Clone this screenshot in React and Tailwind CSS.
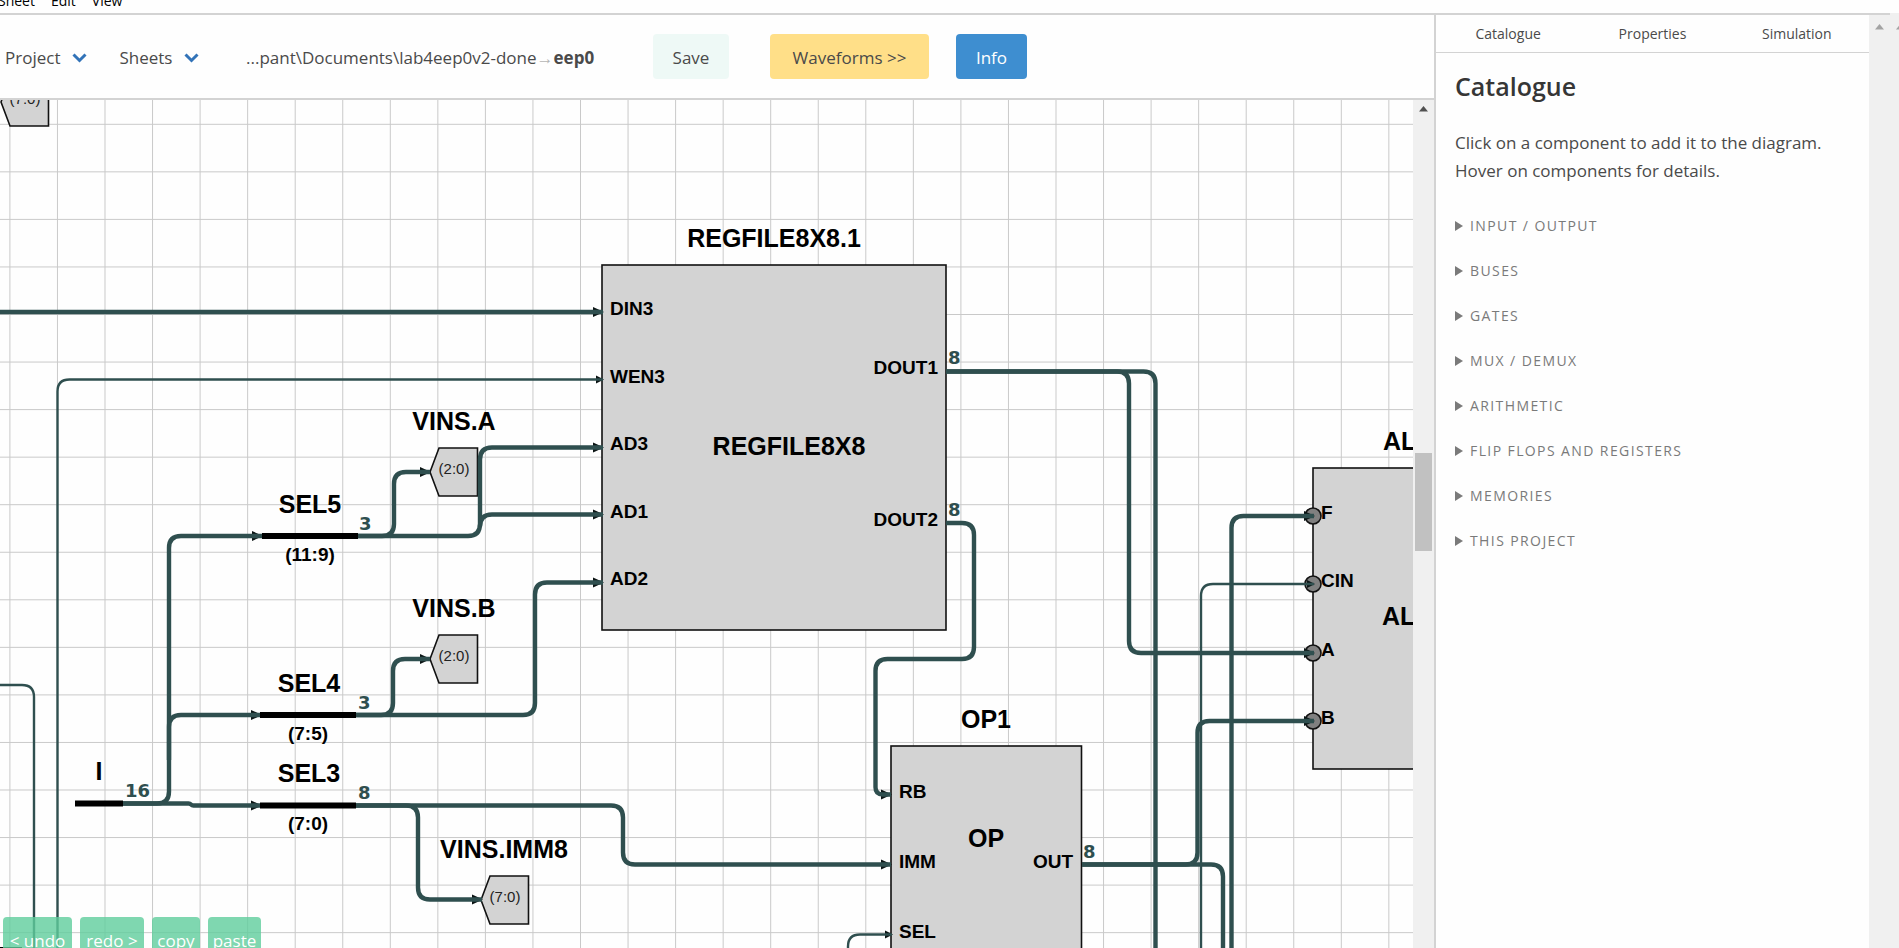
import React from "react";

const WIRE = "#2f4f4f";

// Turns a list of orthogonal points into a path with rounded corners.
function roundedPath(points, radius = 12) {
  let d = `M${points[0][0]} ${points[0][1]}`;
  for (let i = 1; i < points.length; i++) {
    const [x, y] = points[i];
    if (i === points.length - 1) {
      d += `L${x} ${y}`;
      break;
    }
    const [px, py] = points[i - 1];
    const [nx, ny] = points[i + 1];
    const before = Math.hypot(x - px, y - py);
    const after = Math.hypot(nx - x, ny - y);
    const r = Math.min(radius, i === 1 ? before : before / 2, after / 2);
    const ax = x + ((px - x) / before) * r;
    const ay = y + ((py - y) / before) * r;
    const bx = x + ((nx - x) / after) * r;
    const by = y + ((ny - y) / after) * r;
    d += `L${ax} ${ay}Q${x} ${y} ${bx} ${by}`;
  }
  return d;
}

const wires = [
  { p: [[0, 312], [603, 312]], arrow: true },
  { p: [[57.5, 960], [57.5, 379.5], [603, 379.5]], thin: true, arrow: true },
  { p: [[0, 685], [34, 685], [34, 960]], thin: true },
  { p: [[357, 536], [480, 536], [480, 447.5], [603, 447.5]], arrow: true },
  { p: [[480, 526.5], [480, 514.5], [603, 514.5]], arrow: true },
  { p: [[357, 536], [394, 536], [394, 472], [430, 472]], arrow: true },
  { p: [[356, 715], [535, 715], [535, 582.5], [603, 582.5]], arrow: true },
  { p: [[356, 715], [393, 715], [393, 659], [430, 659]], arrow: true },
  { p: [[123, 803.5], [169, 803.5], [169, 536], [262, 536]], arrow: true },
  { p: [[169, 760], [169, 715], [261, 715]], arrow: true },
  { p: [[123, 803.5], [190, 803.5], [192, 805.5], [261, 805.5]], arrow: true },
  { p: [[356, 805.5], [623, 805.5], [623, 864.5], [891, 864.5]], arrow: true },
  { p: [[356, 805.5], [418, 805.5], [418, 899.5], [482, 899.5]], arrow: true },
  { p: [[946, 371.5], [1155.5, 371.5], [1155.5, 960]] },
  { p: [[946, 371.5], [1129, 371.5], [1129, 653], [1314, 653]], arrow: true },
  { p: [[946, 523], [974, 523], [974, 659], [875.5, 659], [875.5, 780], [875.5, 794.5], [891, 794.5]], arrow: true },
  { p: [[848, 960], [848, 934.5], [892, 934.5]], thin: true, arrow: true },
  { p: [[1082, 864.5], [1223, 864.5], [1223, 960]] },
  { p: [[1082, 864.5], [1197.5, 864.5], [1197.5, 721], [1314, 721]], arrow: true },
  { p: [[1201, 960], [1201, 584], [1314, 584]], thin: true, arrow: true },
  { p: [[1231.5, 960], [1231.5, 516], [1314, 516]], arrow: true },
];

const titles = [
  [774, 247, "REGFILE8X8.1"],
  [789, 455, "REGFILE8X8"],
  [454, 430, "VINS.A"],
  [454, 617, "VINS.B"],
  [504, 858, "VINS.IMM8"],
  [310, 513, "SEL5"],
  [309, 692, "SEL4"],
  [309, 782, "SEL3"],
  [99, 780, "I"],
  [986, 728, "OP1"],
  [986, 847, "OP"],
];

const ranges = [
  [310, 561, "(11:9)"],
  [308, 740, "(7:5)"],
  [308, 830, "(7:0)"],
];

const inPorts = [
  [610, 315, "DIN3"],
  [610, 383, "WEN3"],
  [610, 450, "AD3"],
  [610, 518, "AD1"],
  [610, 585, "AD2"],
  [899, 798, "RB"],
  [899, 868, "IMM"],
  [899, 938, "SEL"],
  [1321, 519, "F"],
  [1321, 587, "CIN"],
  [1321, 656, "A"],
  [1321, 724, "B"],
];

const outPorts = [
  [938, 374, "DOUT1"],
  [938, 526, "DOUT2"],
  [1073, 868, "OUT"],
];

const widths = [
  [359, 530, "3"],
  [358, 709, "3"],
  [358, 799, "8"],
  [125, 797, "16"],
  [948, 364, "8"],
  [948, 516, "8"],
  [1083, 858, "8"],
];

const tags = [
  [430, 472, "(2:0)"],
  [430, 659, "(2:0)"],
  [481, 900, "(7:0)"],
  [1, 102, "(7:0)"],
];

const bars = [
  [262, 536, 96],
  [260, 715, 96],
  [260, 805.5, 96],
  [75, 803.5, 48],
  [-26, 950, 48],
];

function Wire({ p, thin, arrow }) {
  const [x, y] = p[p.length - 1];
  const back = thin ? 7 : 10;
  const half = thin ? 4 : 5;
  return (
    <g>
      {arrow && <polygon points={`${x - back},${y - half} ${x + 1},${y} ${x - back},${y + half}`} fill="#0b1414" />}
      <path d={roundedPath(p)} fill="none" stroke={WIRE} strokeWidth={thin ? 2.4 : 4.4} />
    </g>
  );
}

function Schematic() {
  return (
    <svg className="block h-full w-full" role="img" aria-label="Schematic">
      <defs>
        <pattern id="grid" x="9.4" y="123.8" width="47.55" height="47.55" patternUnits="userSpaceOnUse">
          <path d="M0 .5H47.55M.5 0V47.55" stroke="#c9c9c9" strokeWidth="1" />
        </pattern>
      </defs>
      <g transform="translate(0 -100)">
        <rect x="0" y="100" width="100%" height="100%" fill="url(#grid)" />
        <g fill="#d3d3d3" stroke="#111" strokeWidth="1.6">
          <rect x="602" y="265" width="344" height="365" />
          <rect x="891" y="746" width="190.5" height="240" />
          <rect x="1313" y="468" width="190" height="301" />
          {tags.map(([x, y]) => (
            <polygon key={`${x}-${y}`} points={`${x},${y} ${x + 9},${y - 24} ${x + 47.5},${y - 24} ${x + 47.5},${y + 24} ${x + 9},${y + 24}`} />
          ))}
        </g>
        <g fill="#808080" stroke="#111" strokeWidth="1.6">
          {[516, 584, 653, 721].map((y) => (
            <circle key={y} cx="1313" cy={y} r="8" />
          ))}
        </g>
        {wires.map((w, i) => (
          <Wire key={i} {...w} />
        ))}
        {bars.map(([x, y, w]) => (
          <rect key={`${x}-${y}`} x={x} y={y - 3} width={w} height="6" fill="#000" />
        ))}
        <g className="font-['Liberation_Sans',Arial,sans-serif] text-[25px] font-bold">
          {titles.map(([x, y, t]) => (
            <text key={t} x={x} y={y} textAnchor="middle">{t}</text>
          ))}
          <text x="1383" y="450">ALU</text>
          <text x="1382" y="625">ALU</text>
        </g>
        <g className="font-['Liberation_Sans',Arial,sans-serif] text-[19px] font-bold">
          {ranges.map(([x, y, t]) => (
            <text key={t} x={x} y={y} textAnchor="middle">{t}</text>
          ))}
          {inPorts.map(([x, y, t]) => (
            <text key={t} x={x} y={y}>{t}</text>
          ))}
          {outPorts.map(([x, y, t]) => (
            <text key={t} x={x} y={y} textAnchor="end">{t}</text>
          ))}
        </g>
        <g className="font-['Liberation_Sans',Arial,sans-serif] text-[15px]" fill="#222">
          {tags.map(([x, y, t]) => (
            <text key={`${x}-${y}`} x={x + 24} y={y + 2} textAnchor="middle">{t}</text>
          ))}
        </g>
        <g className="font-['DejaVu_Sans',Verdana,sans-serif] text-[18px] font-bold" fill={WIRE}>
          {widths.map(([x, y, t]) => (
            <text key={`${x}-${y}`} x={x} y={y}>{t}</text>
          ))}
        </g>
      </g>
    </svg>
  );
}

function Dropdown({ label }) {
  return (
    <button type="button" className="flex items-center gap-3">
      {label}
      <svg width="15" height="10" viewBox="0 0 15 10" aria-hidden="true">
        <path d="M1.5 1.5L7.5 7.5L13.5 1.5" fill="none" stroke="#3273b8" strokeWidth="3" />
      </svg>
    </button>
  );
}

function ScrollArrow({ className }) {
  return (
    <svg width="9" height="6" viewBox="0 0 9 6" className={className} aria-hidden="true">
      <path d="M0 5.5L4.5 0L9 5.5Z" fill="currentColor" />
    </svg>
  );
}

const sections = [
  "Input / Output",
  "Buses",
  "Gates",
  "Mux / Demux",
  "Arithmetic",
  "Flip Flops and Registers",
  "Memories",
  "This Project",
];

export default function App() {
  return (
    <div className="flex h-screen flex-col overflow-hidden bg-[#fefefe] font-['Open_Sans','Noto_Sans',sans-serif] text-[17px] text-[#4a4a4a]">
      <nav aria-label="Application menu" className="flex h-[13px] shrink-0 items-end gap-4 overflow-hidden pb-0.5 text-sm leading-5 text-black">
        <button type="button" className="-ml-0.5">Sheet</button>
        <button type="button">Edit</button>
        <button type="button">View</button>
      </nav>

      <div className="flex min-h-0 flex-1">
        <div className="flex min-w-0 flex-1 border-t-2 border-[#d3d3d3]">
          <main className="flex min-w-0 flex-1 flex-col">
            <header className="flex h-[85px] shrink-0 items-center border-b-2 border-[#d3d3d3] pl-[5px] whitespace-nowrap">
              <div className="flex w-[241px] shrink-0 gap-8 pt-0.5">
                <Dropdown label="Project" />
                <Dropdown label="Sheets" />
              </div>
              <p className="w-[407px] shrink-0 pt-0.5">
                ...pant\Documents\lab4eep0v2-done
                <span className="text-[#b5b5b5]">→</span>
                <strong>eep0</strong>
              </p>
              <button type="button" className="h-[45px] w-[76px] rounded-[4px] bg-[#eef9f6] pt-0.5">Save</button>
              <button type="button" className="ml-[41px] h-[45px] w-[159px] rounded-[4px] bg-[#ffdf88] pt-0.5">Waveforms &gt;&gt;</button>
              <button type="button" className="ml-[27px] h-[45px] w-[71px] rounded-[4px] bg-[#3e8ed0] pt-0.5 text-white">Info</button>
            </header>

            <div className="flex min-h-0 flex-1">
              <div className="relative min-w-0 flex-1 overflow-hidden">
                <Schematic />
                <div className="absolute -bottom-3.5 left-[3px] flex gap-2 text-[17px] text-white">
                  <button type="button" className="h-[45px] w-[69px] rounded-[4px] bg-[#5fcd9c]/80 pt-0.5">&lt; undo</button>
                  <button type="button" className="h-[45px] w-[64px] rounded-[4px] bg-[#5fcd9c]/80 pt-0.5">redo &gt;</button>
                  <button type="button" className="h-[45px] w-[48px] rounded-[4px] bg-[#5fcd9c]/80 pt-0.5">copy</button>
                  <button type="button" className="h-[45px] w-[53px] rounded-[4px] bg-[#5fcd9c]/80 pt-0.5">paste</button>
                </div>
              </div>
              <div className="flex w-[21px] shrink-0 flex-col items-center bg-[#f0f0f0] pt-1.5" aria-hidden="true">
                <ScrollArrow className="text-[#505050]" />
                <div className="mt-[341px] h-[98px] w-[17px] bg-[#c1c1c1]" />
              </div>
            </div>
          </main>

          <aside className="w-[435px] shrink-0 border-l-2 border-[#d3d3d3]">
            <div role="tablist" className="grid h-[38px] grid-cols-3 border-b border-[#d3d3d3] text-sm">
              <button type="button" role="tab" aria-selected="true">Catalogue</button>
              <button type="button" role="tab" aria-selected="false">Properties</button>
              <button type="button" role="tab" aria-selected="false">Simulation</button>
            </div>
            <div className="px-[19px] pt-[17px]">
              <h1 className="text-[25px] leading-8 font-semibold text-[#363636]">Catalogue</h1>
              <p className="mt-[27px] leading-7 whitespace-nowrap">
                Click on a component to add it to the diagram.
                <br />
                Hover on components for details.
              </p>
              <div className="mt-[18px] text-[14px] tracking-widest text-[#7a7a7a] uppercase">
                {sections.map((s) => (
                  <details key={s}>
                    <summary className="flex h-[45px] cursor-pointer list-none items-center gap-[7px]">
                      <svg width="8" height="10" viewBox="0 0 8 10" aria-hidden="true">
                        <path d="M0 0L8 5L0 10Z" fill="currentColor" />
                      </svg>
                      {s}
                    </summary>
                  </details>
                ))}
              </div>
            </div>
          </aside>

          <div className="flex w-[21px] shrink-0 justify-center bg-[#f0f0f0] pt-[9px] text-[#a3a3a3]" aria-hidden="true">
            <ScrollArrow />
          </div>
        </div>
        <div className="w-[9px] shrink-0 overflow-hidden bg-[#f0f0f0] pt-[11px] pl-[6px] text-[#a3a3a3]" aria-hidden="true">
          <ScrollArrow className="max-w-none" />
        </div>
      </div>
    </div>
  );
}
